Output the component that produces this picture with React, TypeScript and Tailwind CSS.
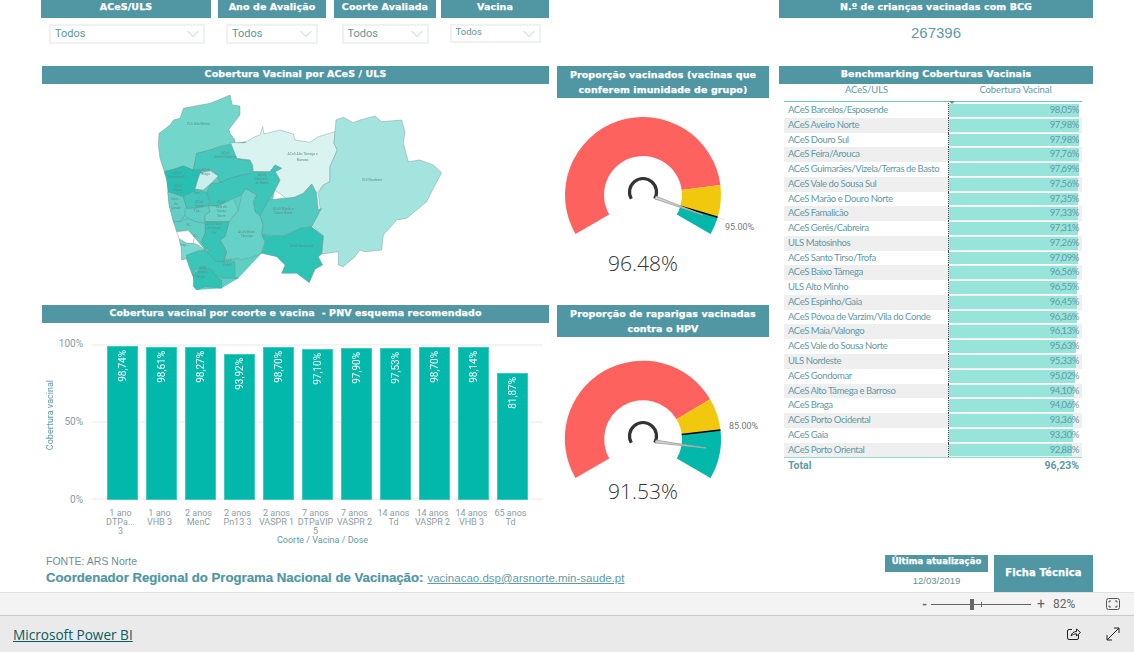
import { ChevronDown } from 'lucide-react';

const heavy = "font-['DejaVu_Sans',sans-serif] font-bold text-white tracking-[0.1px] [-webkit-text-stroke:0.25px_white] whitespace-nowrap";
const teal = 'text-[#5f9aa6]';

const rows: [string, number][] = [
  ['ACeS Barcelos/Esposende', 98.05],
  ['ACeS Aveiro Norte', 97.98],
  ['ACeS Douro Sul', 97.98],
  ['ACeS Feira/Arouca', 97.76],
  ['ACeS Guimarães/Vizela/Terras de Basto', 97.69],
  ['ACeS Vale do Sousa Sul', 97.56],
  ['ACeS Marão e Douro Norte', 97.35],
  ['ACeS Famalicão', 97.33],
  ['ACeS Gerês/Cabreira', 97.31],
  ['ULS Matosinhos', 97.26],
  ['ACeS Santo Tirso/Trofa', 97.09],
  ['ACeS Baixo Tâmega', 96.56],
  ['ULS Alto Minho', 96.55],
  ['ACeS Espinho/Gaia', 96.45],
  ['ACeS Póvoa de Varzim/Vila do Conde', 96.36],
  ['ACeS Maia/Valongo', 96.13],
  ['ACeS Vale do Sousa Norte', 95.63],
  ['ULS Nordeste', 95.33],
  ['ACeS Gondomar', 95.02],
  ['ACeS Alto Tâmega e Barroso', 94.1],
  ['ACeS Braga', 94.06],
  ['ACeS Porto Ocidental', 93.36],
  ['ACeS Gaia', 93.3],
  ['ACeS Porto Oriental', 92.88],
];

const bars: [number, string[]][] = [
  [98.74, ['1 ano', 'DTPa...', '3']],
  [98.61, ['1 ano', 'VHB 3']],
  [98.27, ['2 anos', 'MenC']],
  [93.92, ['2 anos', 'Pn13 3']],
  [98.7, ['2 anos', 'VASPR 1']],
  [97.1, ['7 anos', 'DTPaVIP', '5']],
  [97.9, ['7 anos', 'VASPR 2']],
  [97.53, ['14 anos', 'Td']],
  [98.7, ['14 anos', 'VASPR 2']],
  [98.14, ['14 anos', 'VHB 3']],
  [81.87, ['65 anos', 'Td']],
];

const comma = (v: number) => v.toFixed(2).replace('.', ',') + '%';

// map outlines were traced on three crops, each with its own offset
const at = (ox: number, oy: number, pts: number[]) => pts.map((n, i) => n + (i % 2 ? oy : ox));
const A = (...p: number[]) => at(45, 15, p);
const B = (...p: number[]) => at(45, 285, p);
const C = (...p: number[]) => at(300, 75, p);

// fills the slivers between neighbouring regions
const silhouette = [
  ...A(28, 245, 115, 190, 272, 155),
  ...C(105, 240, 65, 430),
  ...B(250, 295, 200, 325, 125, 330, 112, 285, 95, 225, 150, 205, 100, 150, 55, 125, 42, 75, 38, 35, 35, 0),
];

const regions: [string, number[]][] = [
  ['#73d6cb', A(28,245, 15,205, 10,165, 12,130, 45,105, 55,90, 75,85, 85,55, 120,48, 165,40, 195,28, 225,15, 232,45, 255,48, 255,75, 222,118, 225,130, 240,150, 240,160, 200,168, 165,180, 125,190, 115,240, 85,228, 55,238)],
  ['#44c7bc', A(125,190, 165,180, 200,168, 240,160, 272,155, 265,185, 252,208, 285,212, 292,240, 285,250, 250,258, 225,265, 195,278, 185,255, 175,240, 140,240, 115,240)],
  ['#d8f3f0', C(-28,98, 15,98, 45,80, 60,75, 68,50, 72,72, 120,60, 160,72, 165,90, 210,97, 235,80, 285,65, 282,100, 292,120, 270,170, 270,215, 250,225, 230,250, 215,222, 190,250, 165,260, 145,270, 105,240, 120,210, 105,185, 125,175, 105,165, 90,185, 40,185, 38,165, 30,150, -10,145)],
  ['#a3e5de', C(288,30, 310,22, 340,38, 360,30, 405,18, 425,35, 485,30, 495,65, 490,100, 505,155, 540,150, 580,165, 605,188, 580,235, 560,275, 500,325, 470,330, 430,375, 425,420, 375,425, 360,420, 345,440, 310,470, 295,465, 295,425, 245,432, 250,378, 215,345, 235,310, 240,295, 235,250, 250,225, 270,215, 270,170, 292,120, 282,100, 285,65)],
  ['#3cc5b9', [...A(170,280, 195,278, 225,265, 250,258, 285,250), ...C(40,185, 90,185, 105,165, 125,175, 105,185, 120,210, 105,240, 85,270, 60,318, 45,305, 40,275, 50,255, 20,238), ...B(270,28, 260,45, 235,55, 190,78, 160,78, 165,65, 155,38, 165,15)]],
  ['#66d2c7', [...B(205,245, 215,215, 195,180, 210,170, 222,125, 250,90, 260,45, 270,28), ...C(20,238, 50,255, 40,275, 45,305, 60,318, 70,345, 65,370, 75,395, 65,430, 40,440, 0,450), ...B(250,235)]],
  ['#52cabf', C(60,318, 85,270, 130,265, 165,262, 190,250, 215,222, 230,250, 235,300, 245,295, 215,350, 180,355, 130,378, 80,375, 65,370, 70,345)],
  ['#2fc3b6', C(65,375, 130,378, 180,355, 215,350, 250,378, 245,432, 235,440, 248,465, 225,478, 208,518, 170,490, 125,490, 135,465, 110,440, 65,430, 75,395)],
  ['#27bfb2', [...A(28,245, 55,238, 85,228, 115,240, 140,240, 122,300), ...B(125,28, 85,50, 40,35, 35,0)]],
  ['#c8efe9', [...A(135,250, 165,242, 190,258, 170,278, 145,300), ...B(125,28, 120,28, 128,0)]],
  ['#62cdc3', B(38,35, 85,50, 95,85, 90,105, 75,125, 55,125, 42,75)],
  ['#40c6ba', B(85,50, 125,28, 155,38, 165,65, 160,75, 120,85, 95,85)],
  ['#5fcfc4', B(90,85, 120,85, 160,78, 165,95, 150,105, 150,130, 120,125, 100,115, 90,105)],
  ['#6ad4c9', B(160,78, 190,78, 235,55, 250,90, 222,125, 205,125, 150,125, 150,105, 165,95)],
  ['#35c4b7', B(150,125, 205,125, 222,125, 210,170, 195,180, 215,215, 205,245, 185,245, 150,210, 138,185, 150,160)],
  ['#5fcfc4', B(55,125, 75,125, 100,115, 120,125, 150,130, 150,160, 138,185, 150,205, 165,210, 155,215, 125,180, 100,150, 65,155)],
  ['#ffffff', B(65,155, 100,152, 118,172, 115,190, 95,190, 72,175)],
  ['#7ad8ce', B(72,178, 95,190, 115,190, 130,195, 155,215, 140,225, 100,235, 80,240, 78,200)],
  ['#3cc5b9', B(95,225, 130,212, 150,210, 185,245, 205,245, 240,245, 240,290, 250,295, 205,295, 175,285, 155,258, 120,270, 112,285, 95,240)],
  ['#2fc3b6', B(112,285, 145,260, 170,270, 185,290, 200,300, 200,325, 150,320, 125,330, 115,320, 115,290)],
];

const mapLabels: [number, number, string][] = [
  [175, 121, 'ULS Alto Minho'],
  [256, 207, 'ACeS'],
  [256, 219, 'Gerês/Cabreira'],
  [488, 211, 'ACeS Alto Tâmega e'],
  [488, 227, 'Barroso'],
  [696, 289, 'ULS Nordeste'],
  [197, 259, 'ACeS'],
  [197, 270, 'Braga'],
  [113, 267, 'ACeS'],
  [113, 279, 'Barcelos/E...'],
  [113, 305, 'ACeS'],
  [113, 317, 'Póvoa'],
  [366, 272, 'ACeS'],
  [366, 286, 'Guimarã...'],
  [366, 298, 'de Basto'],
  [430, 374, 'ACeS Marão e'],
  [430, 386, 'Douro Norte'],
  [485, 486, 'ACeS Douro Sul'],
  [320, 443, 'ACeS Baixo'],
  [320, 456, 'Tâmega'],
  [244, 354, 'ACeS'],
  [244, 369, 'Vale do'],
  [244, 382, 'Sousa'],
  [244, 396, 'Norte'],
  [222, 420, 'ACeS Vale'],
  [222, 432, 'de Sousa'],
  [222, 446, 'Sul'],
  [178, 354, 'ACeS'],
  [178, 366, 'Santo'],
  [174, 382, 'Tirs...'],
  [175, 328, 'Fam...'],
  [107, 345, 'Varzi...'],
  [107, 360, 'do'],
  [107, 373, 'Conde'],
  [148, 424, 'M...'],
  [168, 456, 'A...'],
  [134, 482, 'Esp...'],
  [263, 527, 'ACeS'],
  [263, 542, 'Feira/'],
  [188, 552, 'ACeS'],
  [188, 565, 'Aveiro'],
  [182, 579, 'Norte'],
];

function pt(cx: number, cy: number, r: number, deg: number) {
  const a = (deg * Math.PI) / 180;
  return `${(cx + r * Math.cos(a)).toFixed(2)} ${(cy + r * Math.sin(a)).toFixed(2)}`;
}

function band(cx: number, cy: number, from: number, to: number) {
  const big = to - from > 180 ? 1 : 0;
  return `M${pt(cx, cy, 78, from)} A78 78 0 ${big} 1 ${pt(cx, cy, 78, to)} L${pt(cx, cy, 39, to)} A39 39 0 ${big} 0 ${pt(cx, cy, 39, from)} Z`;
}

type GaugeProps = {
  h: number;
  cy: number;
  split: number;
  target: number;
  tip: [number, number];
  label: string;
  labelPos: [number, number];
  leader?: [number, number];
};

const Gauge = ({ h, cy, split, target, tip, label, labelPos, leader }: GaugeProps) => {
  const cx = 86;
  const small = 13.5;
  return (
    <svg width={212} height={h} className="block overflow-visible">
      <path d={band(cx, cy, 150, 360 + split)} fill="#fd625e" />
      <path d={band(cx, cy, split, target)} fill="#f2c80f" />
      <path d={band(cx, cy, target, 30)} fill="#01b8aa" />
      <path d={`M${pt(cx, cy, 39, target)} L${pt(cx, cy, 78, target)}`} stroke="#000" strokeWidth={1.5} />
      {leader && <path d={`M${pt(cx, cy, 78, target)} L${leader[0]} ${leader[1]}`} stroke="#e2e2e2" strokeWidth={1} />}
      <path
        d={`M${pt(cx, cy - 3, small, 150)} A${small} ${small} 0 1 1 ${pt(cx, cy - 3, small, 30)}`}
        fill="none"
        stroke="#333"
        strokeWidth={3.2}
      />
      <path
        d={`M${pt(cx, cy - 3, small, 30)} L${tip[0]} ${tip[1]} L${pt(cx, cy - 3, small, 18)}`}
        fill="#d4d4d4"
        stroke="#a8a8a8"
        strokeWidth={1}
      />
      <text x={labelPos[0]} y={labelPos[1]} fontSize={9} fill="#777" fontFamily="Roboto, sans-serif">
        {label}
      </text>
    </svg>
  );
};

const Select = ({ w, small }: { w: string; small?: boolean }) => (
  <div className={`${w} ${small ? 'h-[19px]' : 'h-[20px]'} border-2 border-[#f0f2f2] flex items-center justify-between pl-1`}>
    <span className={small ? 'text-[9.5px] mb-[2px] text-[#64939d]' : 'text-[11px] text-[#64939d]'}>Todos</span>
    <ChevronDown className="w-[20px] h-[20px] text-[#9fb0b4]" strokeWidth={0.8} />
  </div>
);

const Head = ({ children, className, size = 'text-[9.5px]' }: { children: React.ReactNode; className: string; size?: string }) => (
  <div className={`${heavy} ${size} ${className} bg-[#5096a3] text-center`}>{children}</div>
);

export default function App() {
  return (
    <div className="w-[1134px] h-[652px] overflow-hidden flex flex-col bg-white font-['Roboto',sans-serif]">
      <div className="h-[592px] flex pl-[41px]">
        {/* left column */}
        <div className="w-[508px] flex flex-col">
          <div className="flex">
            <div className="w-[170px] mr-[7px] flex flex-col items-center">
              <Head className="w-full h-[18px] leading-[13px]">ACeS/ULS</Head>
              <div className="mt-[6px] ml-[2px]"><Select w="w-[156px]" /></div>
            </div>
            <div className="w-[108px] mr-[8px] flex flex-col items-center">
              <Head className="w-full h-[18px] leading-[13px]">Ano de Avalição</Head>
              <div className="mt-[6px]"><Select w="w-[92px]" /></div>
            </div>
            <div className="w-[102px] mr-[5px] flex flex-col items-center">
              <Head className="w-full h-[18px] leading-[13px]">Coorte Avaliada</Head>
              <div className="mt-[6px]"><Select w="w-[87px]" /></div>
            </div>
            <div className="w-[108px] flex flex-col items-center">
              <Head className="w-full h-[18px] leading-[13px]">Vacina</Head>
              <div className="mt-[6px] mb-px"><Select w="w-[91px]" small /></div>
            </div>
          </div>

          <Head className="ml-px mt-[22px] h-[18px] leading-[15px]">Cobertura Vacinal por ACeS / ULS</Head>

          <svg width={310} height={210} viewBox="0 0 930 630" className="block ml-[99px] mt-px blur-[0.4px]">
            <polygon points={silhouette.join(' ')} fill="#5fcfc4" />
            {regions.map(([fill, p], i) => (
              <polygon key={i} points={p.join(' ')} fill={fill} stroke="#6f8a88" strokeWidth={1.2} strokeLinejoin="round" />
            ))}
            {mapLabels.map(([x, y, t], i) => (
              <text key={i} x={x} y={y} textAnchor="middle" fontSize={10} fill="#5f8f8a" fontFamily="Roboto, sans-serif">
                {t}
              </text>
            ))}
          </svg>

          <Head className="ml-px mt-[10px] h-[18px] leading-[15px]">Cobertura vacinal por coorte e vacina&nbsp; - PNV esquema recomendado</Head>

          {/* bar chart */}
          <div className="flex mt-[21px]">
            <div className="w-[11px] ml-[4px] pb-[14px] flex items-center justify-center">
              <span className={`[writing-mode:vertical-rl] rotate-180 text-[9px] ${teal} whitespace-nowrap`}>Cobertura vacinal</span>
            </div>
            <div className="w-[27px] h-[166px] flex flex-col justify-between items-end text-[10px] text-[#7f9ea5] leading-none -mt-[5px] -mb-[5px]">
              <span>100%</span>
              <span>50%</span>
              <span>0%</span>
            </div>
            <div className="relative ml-[9px] w-[451px] h-[156px] pl-[15px]">
              <div className="absolute left-0 right-0 top-0 h-[2px] bg-[#f4f4f4]" />
              <div className="absolute left-0 right-0 top-[77px] h-[2px] bg-[#f4f4f4]" />
              <div className="absolute left-0 right-0 bottom-0 h-[2px] bg-[#f4f4f4]" />
              <div className="relative h-full flex items-end gap-[8px]">
                {bars.map(([v], i) => (
                  <div
                    key={i}
                    className="w-[31px] bg-[#01b8aa] border border-[#3fcabf] flex justify-center"
                    style={{ height: `${v * 1.555}px` }}
                  >
                    <span className="[writing-mode:vertical-rl] rotate-180 text-white text-[10px] leading-none mt-[3px] h-fit whitespace-nowrap">
                      {comma(v)}
                    </span>
                  </div>
                ))}
              </div>
            </div>
          </div>
          <div className="flex pl-[60px] mt-[9px]">
            {bars.map(([, lines], i) => (
              <div key={i} className="w-[39px] flex flex-col items-center text-[9px] leading-[9px] text-[#8a9ea3] whitespace-nowrap">
                {lines.map((l, j) => (
                  <span key={j}>{l}</span>
                ))}
              </div>
            ))}
          </div>
          <div className={`h-[10px] -mt-[1px] pl-[236px] text-[9px] leading-[10px] ${teal}`}>Coorte / Vacina / Dose</div>

          <div className="pl-[5px] mt-[10px] text-[10.5px] leading-[12px] text-[#6f8f96] font-['Liberation_Sans',sans-serif]">FONTE: ARS Norte</div>
          <div className="pl-[5px] mt-[3px] leading-[15px] flex items-baseline gap-[4px] whitespace-nowrap font-['Liberation_Sans',sans-serif]">
            <span className="font-bold text-[13.2px] text-[#5096a3] [-webkit-text-stroke:0.2px_#5096a3]">Coordenador Regional do Programa Nacional de Vacinação:</span>
            <span className="underline text-[11.5px] text-[#5f9aa6]">vacinacao.dsp@arsnorte.min-saude.pt</span>
          </div>
        </div>

        {/* middle column */}
        <div className="w-[212px] ml-[8px] pt-[66px] flex flex-col">
          <Head className="h-[32px] leading-[15px] pt-px">
            Proporção vacinados (vacinas que
            <br />
            conferem imunidade de grupo)
          </Head>
          <Gauge h={150} cy={97} split={-7.3} target={16.6} tip={[146, 117]} label="95.00%" labelPos={[168, 132]} leader={[168, 122]} />
          <div className="w-[172px] text-center text-[#333] text-[21px] leading-[30px] font-light font-['Open_Sans',sans-serif]">96.48%</div>
          <Head className="mt-[27px] h-[32px] leading-[15px] pt-px">
            Proporção de raparigas vacinadas
            <br />
            contra o HPV
          </Head>
          <Gauge h={139} cy={102} split={-30.6} target={-6.6} tip={[149, 111]} label="85.00%" labelPos={[172, 92]} />
          <div className="w-[172px] text-center text-[#333] text-[21px] leading-[30px] font-light font-['Open_Sans',sans-serif]">91.53%</div>
        </div>

        {/* right column */}
        <div className="w-[314px] ml-[10px] flex flex-col">
          <Head className="h-[18px] leading-[13px]">N.º de crianças vacinadas com BCG</Head>
          <div className={`h-[28px] mt-px text-center text-[15px] leading-[28px] font-['Liberation_Sans',sans-serif] ${teal}`}>267396</div>
          <Head className="mt-[19px] h-[18px] leading-[15px]">Benchmarking Coberturas Vacinais</Head>
          <div className="ml-[5px] w-[298px] flex flex-col">
            <div className={`relative flex h-[18px] border-b border-[#6cc8c2] text-[9.5px] tracking-[-0.1px] leading-[12px] font-['Lato',sans-serif] ${teal}`}>
              <div className="w-[165px] text-center">ACeS/ULS</div>
              <div className="w-[133px] text-center">Cobertura Vacinal</div>
              <div className="absolute left-[165px] bottom-[-3px] w-0 h-0 border-x-[3px] border-x-transparent border-t-[3px] border-t-[#6a8a92]" />
            </div>
            <div className="flex flex-col pt-px border-b border-[#8fdcd3]">
              {rows.map(([name, v], i) => (
                <div key={name} className={`h-[14.78px] flex items-center text-[9.5px] tracking-[-0.42px] font-['Lato',sans-serif] ${teal} ${i % 2 ? 'bg-[#efefef]' : 'bg-white'}`}>
                  <div className="w-[165px] pl-1 whitespace-nowrap border-r border-dotted border-[#444] h-full leading-[14.78px]">{name}</div>
                  <div className="relative w-[133px] h-full py-px">
                    <div className="h-full bg-[#97e4da]" style={{ width: `${v * 1.327}px` }} />
                    <span className="absolute right-[3px] top-0 leading-[14.78px]">{comma(v)}</span>
                  </div>
                </div>
              ))}
            </div>
            <div className={`flex justify-between px-1 pr-[3px] text-[10.5px] leading-[15px] font-bold ${teal}`}>
              <span>Total</span>
              <span>96,23%</span>
            </div>
          </div>

          <div className="mt-auto flex justify-end items-start">
            <div className="w-[103px] mr-[6px] flex flex-col items-center">
              <Head className="w-full h-[17px] leading-[13px]" size="text-[8.4px]">Última atualização</Head>
              <div className="text-[9.5px] leading-[16px] mt-[1px] text-[#5f8f99] font-['Liberation_Sans',sans-serif]">12/03/2019</div>
            </div>
            <Head className="w-[99px] h-[37px] leading-[36px]" size="text-[10px]">Ficha Técnica</Head>
          </div>
        </div>
      </div>

      {/* zoom bar */}
      <div className="h-[24px] bg-[#f3f3f3] border-y border-t-[#e1e1e1] border-b-[#c8c8c8] flex items-center pl-[922px] text-[#666]">
        <span className="w-[8px] text-[13px] leading-none font-bold">-</span>
        <div className="relative w-[100px] h-[1px] bg-[#666] ml-px">
          <div className="absolute left-[39px] -top-[5px] w-[4px] h-[11px] bg-[#666]" />
          <div className="absolute left-[50px] -top-[2px] w-px h-[5px] bg-[#666]" />
        </div>
        <span className="ml-[6px] w-[10px] text-[14px] leading-none">+</span>
        <span className="ml-[6px] text-[12px]">82%</span>
        <svg width={14} height={12} viewBox="0 0 14 12" className="ml-[31px]" fill="none" stroke="#555">
          <rect x="0.5" y="0.5" width="13" height="11" rx="2" />
          <path d="M3 4.5V3h2M9 3h2v1.5M11 7.5V9H9M5 9H3V7.5" />
        </svg>
      </div>

      {/* footer */}
      <div className="flex-1 bg-[#eaeaea] flex items-center pl-[13px] pr-[14px]">
        <a className="underline text-[13.6px] mt-[3px] text-[#0b5a5f] font-['Open_Sans',sans-serif]">Microsoft Power BI</a>
        <svg width={14} height={14} viewBox="0 0 14 14" className="ml-auto" fill="none" stroke="#222">
          <path d="M5 2.5H2a1.5 1.5 0 0 0-1.5 1.5v7A1.5 1.5 0 0 0 2 12.5h8a1.5 1.5 0 0 0 1.5-1.5V8" />
          <path d="M4 9c.5-3 3-4.5 5.5-4.5V2l4 3.5-4 3.5V6.8C7.5 6.8 5.5 7.5 4 9z" />
        </svg>
        <svg width={14} height={14} viewBox="0 0 14 14" className="ml-[25px]" fill="none" stroke="#222">
          <path d="M1 13L13 1M8 1h5v5M1 8v5h5" />
        </svg>
      </div>
    </div>
  );
}
